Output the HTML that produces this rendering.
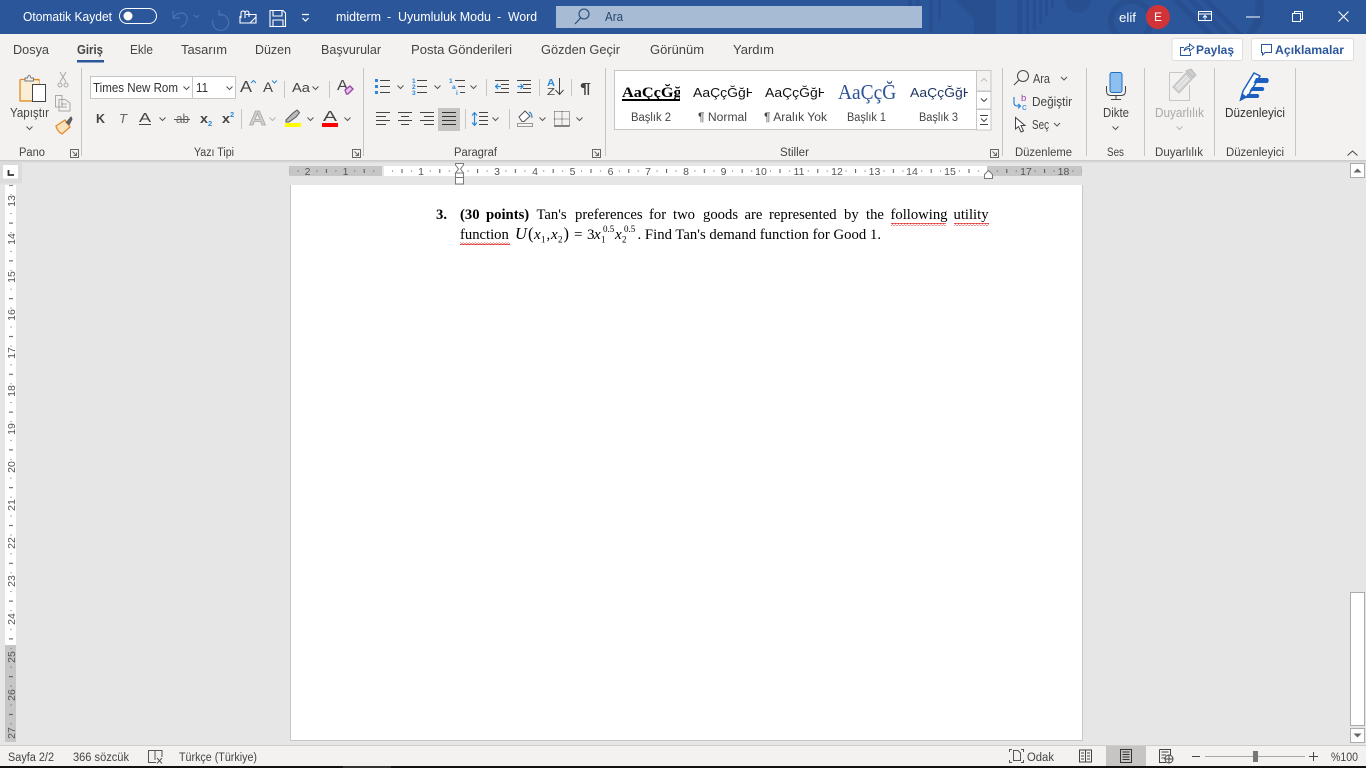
<!DOCTYPE html>
<html lang="tr"><head><meta charset="utf-8"><title>midterm - Word</title>
<style>
html,body{margin:0;padding:0;background:#e6e6e6;overflow:hidden}
svg{display:block}
text{font-family:"Liberation Sans",sans-serif;fill:#444;font-size:12.5px}
.w{fill:#fff}
.g{font-size:11.5px}
.r{font-size:10.5px;fill:#555}
.t{font-family:"Liberation Serif",serif;fill:#000;font-size:14.67px}
.b{font-weight:bold}
.i{font-style:italic}
.ln{fill:none;stroke:#444;stroke-width:1}
.bl{fill:none;stroke:#2b88d8;stroke-width:1.2}
</style></head><body>
<svg xmlns="http://www.w3.org/2000/svg" width="1366" height="768" viewBox="0 0 1366 768">
<defs>
<path id="c" d="M-3-1.5L0 1.5L3-1.5" fill="none" stroke="#555" stroke-width="1"/>
<path id="cg" d="M-3-1.5L0 1.5L3-1.5" fill="none" stroke="#b5b5b5" stroke-width="1"/>
<path id="la" d="M0 0H8V8H0ZM2 2L6 6M3 6H6V3" fill="none" stroke="#666" stroke-width="1"/>
<pattern id="sqp" width="3" height="3" patternUnits="userSpaceOnUse"><path d="M0 .6L1.5 2L3 .6" fill="none" stroke="#e01b1b" stroke-width="1"/></pattern>
<pattern id="hr" x="383" y="165" width="37.8" height="12" patternUnits="userSpaceOnUse"><rect x="9" y="5.5" width="1" height="1" fill="#555"/><rect x="18.5" y="4" width="1" height="4" fill="#555"/><rect x="28" y="5.5" width="1" height="1" fill="#555"/></pattern>
<pattern id="vr" x="5" y="166.3" width="12" height="37.8" patternUnits="userSpaceOnUse"><rect x="5.5" y="9" width="1" height="1" fill="#555"/><rect x="4" y="18.5" width="4" height="1" fill="#555"/><rect x="5.5" y="28" width="1" height="1" fill="#555"/></pattern>
<clipPath id="tb"><rect x="0" y="0" width="1366" height="34"/></clipPath>
</defs>

<!-- backgrounds -->
<rect width="1366" height="768" fill="#e6e6e6"/>
<rect width="1366" height="34" fill="#2b579a"/>
<g clip-path="url(#tb)" fill="#285090">
<rect x="908" y="0" width="4" height="20"/><rect x="916" y="0" width="3" height="26"/><rect x="929" y="0" width="4" height="32"/><rect x="938" y="0" width="3" height="20"/>
<path d="M955 0L975 20V0Z"/><rect x="974" y="0" width="22" height="34"/><rect x="1017" y="0" width="5" height="34"/><rect x="1026" y="0" width="3" height="34"/><rect x="1033" y="0" width="3" height="30"/><rect x="1039" y="0" width="3" height="24"/><rect x="1045" y="0" width="3" height="16"/><rect x="1051" y="0" width="3" height="8"/>
<circle cx="1078" cy="0" r="13"/>
<circle cx="1131" cy="21" r="20" fill="none" stroke="#285090" stroke-width="6"/>
<path d="M1180 0L1214 34H1206L1172 0ZM1195 0L1229 34H1221L1187 0ZM1210 0L1244 34H1236L1202 0Z"/>
<path d="M1263 0Q1268 20 1254 34H1246Q1258 18 1255 0Z"/>
</g>
<rect y="34" width="1366" height="126" fill="#f3f2f1"/>
<rect y="160" width="1366" height="1" fill="#cbcbcb"/><rect y="161" width="1366" height="1" fill="#d6d6d6"/><rect y="162" width="1366" height="1" fill="#dedede"/>

<!-- title bar -->
<text class="w" x="23" y="21" textLength="89" lengthAdjust="spacingAndGlyphs">Otomatik Kaydet</text>
<rect x="119.500" y="8.500" width="37" height="15" rx="7.500" fill="none" stroke="#fff"/>
<circle cx="128" cy="16" r="4.500" fill="#fff"/>
<g fill="none" stroke="#4a72ad" stroke-width="1.200"><path d="M173 11V18H180M173 18C177 11 188 11 187 20Q186 25 181 27"/><path d="M194 15l2.500 2.500l2.500-2.500"/><path d="M219 10V15H224M219.500 14.500A8 8 0 1 1 213 20"/></g>
<g fill="none" stroke="#fff" stroke-width="1.100"><path d="M246 14.500H256V23H240V16M250 23L256 17"/><path d="M241 18V13Q241 11 243 11Q245 11 245 13V18M245 14Q245 11 247 11Q249 11 249 14V17"/>
<path d="M270 10.500H283L285.500 13V26.500H270ZM273 10.500V16H282V10.500M273 26.500V20H283V26.500"/>
<path d="M302 14.500H309M302.500 18l3 3l3-3" stroke-width="1.200"/></g>
<text class="w" x="336" y="21" textLength="45" lengthAdjust="spacingAndGlyphs">midterm</text>
<text class="w" x="387" y="21">-</text>
<text class="w" x="398" y="21" textLength="93" lengthAdjust="spacingAndGlyphs">Uyumluluk Modu</text>
<text class="w" x="497" y="21">-</text>
<text class="w" x="508" y="21" textLength="29" lengthAdjust="spacingAndGlyphs">Word</text>
<rect x="556" y="6" width="366" height="22" fill="#a8bbd4"/>
<g fill="none" stroke="#24466f" stroke-width="1.100"><circle cx="584" cy="14" r="5"/><path d="M580.500 18L575 24"/></g>
<text x="605" y="21" textLength="18" lengthAdjust="spacingAndGlyphs" style="fill:#24466f">Ara</text>
<text class="w" x="1119" y="22" textLength="17" lengthAdjust="spacingAndGlyphs">elif</text>
<circle cx="1158" cy="17" r="12" fill="#d13438"/>
<text class="w" x="1154" y="21" textLength="8" lengthAdjust="spacingAndGlyphs" style="font-size:11.500px">E</text>
<g fill="none" stroke="#fff" stroke-width="1"><path d="M1198.500 11.500H1211.500V20.500H1198.500ZM1198.500 14H1211.500M1205 19.500V15.500M1203 17.500L1205 15.500L1207 17.500"/>
<path d="M1246 17H1260"/>
<path d="M1292.500 13.500H1300.500V21.500H1292.500ZM1294.500 13.500V11.500H1302.500V19.500H1300.500"/>
<path d="M1338.500 11.500L1348.500 21.500M1348.500 11.500L1338.500 21.500" stroke-width="1.100"/></g>

<!-- tabs -->
<text x="13" y="54" textLength="36" lengthAdjust="spacingAndGlyphs">Dosya</text>
<text x="77" y="54" textLength="26" lengthAdjust="spacingAndGlyphs" style="font-weight:bold;fill:#444">Giriş</text>
<rect x="77" y="60" width="27" height="2.500" fill="#2b579a"/>
<text x="130" y="54" textLength="23" lengthAdjust="spacingAndGlyphs">Ekle</text>
<text x="181" y="54" textLength="46" lengthAdjust="spacingAndGlyphs">Tasarım</text>
<text x="255" y="54" textLength="36" lengthAdjust="spacingAndGlyphs">Düzen</text>
<text x="321" y="54" textLength="60" lengthAdjust="spacingAndGlyphs">Başvurular</text>
<text x="411" y="54" textLength="101" lengthAdjust="spacingAndGlyphs">Posta Gönderileri</text>
<text x="541" y="54" textLength="79" lengthAdjust="spacingAndGlyphs">Gözden Geçir</text>
<text x="650" y="54" textLength="54" lengthAdjust="spacingAndGlyphs">Görünüm</text>
<text x="733" y="54" textLength="41" lengthAdjust="spacingAndGlyphs">Yardım</text>

<rect x="1172" y="38.500" width="70.500" height="22" rx="2" fill="#fff" stroke="#e1dfdd"/>
<path d="M1184 47.500H1180.500V55.500H1190.500V52M1184 51Q1185 46.500 1189.500 46.500V44L1194 47.500L1189.500 51V48.500Q1186 48.500 1184 51Z" fill="none" stroke="#2b579a"/>
<text x="1196" y="54" textLength="38" lengthAdjust="spacingAndGlyphs" style="fill:#2b579a;font-weight:bold;font-size:12px">Paylaş</text>
<rect x="1251.500" y="38.500" width="102" height="22" rx="2" fill="#fff" stroke="#e1dfdd"/>
<path d="M1261.500 44.500H1271.500V52.500H1265L1262.500 55V52.500H1261.500Z" fill="none" stroke="#2b579a"/>
<text x="1275" y="54" textLength="69" lengthAdjust="spacingAndGlyphs" style="fill:#2b579a;font-weight:bold;font-size:12px">Açıklamalar</text>

<!-- group separators -->
<g fill="#c6c6c6"><rect x="81" y="68" width="1" height="88"/><rect x="363" y="68" width="1" height="88"/><rect x="605" y="68" width="1" height="88"/><rect x="1002" y="68" width="1" height="88"/><rect x="1086" y="68" width="1" height="88"/><rect x="1144" y="68" width="1" height="88"/><rect x="1214" y="68" width="1" height="88"/><rect x="1295" y="68" width="1" height="88"/></g>

<!-- Pano -->
<path d="M20 79.500H27M34 79.500H39V86M32 101H20V79.500" fill="#f7ddb0" stroke="#e08a1e" stroke-width="1.200"/>
<rect x="21" y="81" width="18" height="19" fill="#fbeed6"/>
<path d="M25 81V78H27.500Q29 72.500 31 78H33.500V81Z" fill="#f3f2f1" stroke="#777"/>
<rect x="32.500" y="84.500" width="13" height="17" fill="#fff" stroke="#444"/>
<text x="10" y="117" textLength="39" lengthAdjust="spacingAndGlyphs">Yapıştır</text>
<use href="#c" x="29.500" y="128"/>
<text class="g" x="19" y="156" textLength="26" lengthAdjust="spacingAndGlyphs">Pano</text>
<use href="#la" x="70.500" y="149.500"/>
<g fill="none" stroke="#a8a8a8" stroke-width="1"><path d="M60 72L66 82M66 72L60 82"/><circle cx="60" cy="85" r="2"/><circle cx="66" cy="85" r="2"/>
<path d="M55.500 95.500H62V107H55.500ZM59 99.500H65L70 103V111H59Z" fill="#f3f2f1"/><path d="M61 104H67M61 107H67"/></g>
<path d="M56 126L65 120L70 127L62 134Q57 131 56 126Z" fill="#fbe3bd" stroke="#e8872a" stroke-width="1.300"/>
<path d="M66 123L71 117L72 119L69 125" fill="#666" stroke="#555"/>

<!-- Font -->
<rect x="90.500" y="76.500" width="102" height="22" fill="#fff" stroke="#c6c6c6"/>
<rect x="192.500" y="76.500" width="43" height="22" fill="#fff" stroke="#c6c6c6"/>
<text x="93" y="92" textLength="85" lengthAdjust="spacingAndGlyphs" style="fill:#333">Times New Rom</text>
<use href="#c" x="186.500" y="88"/>
<text x="196" y="92" textLength="12" lengthAdjust="spacingAndGlyphs" style="fill:#333">11</text>
<use href="#c" x="229.500" y="88"/>
<text x="240" y="92" textLength="12" lengthAdjust="spacingAndGlyphs" style="font-size:16px">A</text>
<path d="M251 83L253.500 80.500L256 83" fill="none" stroke="#2b88d8"/>
<text x="263" y="92" textLength="10" lengthAdjust="spacingAndGlyphs" style="font-size:14px">A</text>
<path d="M272 80.500L274.500 83L277 80.500" fill="none" stroke="#2b88d8"/>
<rect x="284" y="81" width="1" height="17" fill="#c6c6c6"/>
<text x="292" y="92" textLength="18" lengthAdjust="spacingAndGlyphs">Aa</text>
<use href="#c" x="315.500" y="88"/>
<rect x="329" y="81" width="1" height="17" fill="#c6c6c6"/>
<text x="337" y="90" textLength="11" lengthAdjust="spacingAndGlyphs" style="font-size:15px">A</text>
<path d="M345 90L350 86L353 89L348 94H346.500Z" fill="#e4c4ea" stroke="#9a3fa8" stroke-width="1.300"/>

<text x="96" y="123" textLength="9" lengthAdjust="spacingAndGlyphs" style="font-weight:bold;font-size:13px">K</text>
<text x="119" y="123" textLength="8" lengthAdjust="spacingAndGlyphs" style="font-style:italic;font-size:13px;fill:#666">T</text>
<text x="139" y="122" textLength="12" lengthAdjust="spacingAndGlyphs" style="font-size:13px">A</text>
<rect x="139" y="124" width="12" height="1" fill="#444"/>
<use href="#c" x="162.500" y="119"/>
<text x="176" y="123" textLength="13" lengthAdjust="spacingAndGlyphs" style="font-size:12.500px;fill:#666">ab</text>
<rect x="174" y="119" width="16" height="1" fill="#555"/>
<text x="200" y="123" textLength="8" lengthAdjust="spacingAndGlyphs" style="font-weight:bold;font-size:12.500px">x</text>
<text x="208" y="126" style="font-size:7.500px;font-weight:bold;fill:#2b88d8">2</text>
<text x="222" y="123" textLength="8" lengthAdjust="spacingAndGlyphs" style="font-weight:bold;font-size:12.500px">x</text>
<text x="230" y="117" style="font-size:7.500px;font-weight:bold;fill:#2b88d8">2</text>
<rect x="241" y="109" width="1" height="20" fill="#c6c6c6"/>
<text x="249" y="125" textLength="17" lengthAdjust="spacingAndGlyphs" style="font-size:20px;font-weight:bold;fill:#d0d0d0;stroke:#a5a5a5;stroke-width:.7px">A</text>
<use href="#cg" x="272.500" y="119"/>
<path d="M286 120L293 113L297 110L299.500 112.500L296 117L289 122H286Z" fill="#bbb" stroke="#555"/>
<rect x="285" y="123" width="16" height="4" fill="#ff0"/>
<use href="#c" x="310.500" y="119"/>
<text x="323" y="121" textLength="14" lengthAdjust="spacingAndGlyphs" style="font-size:15px">A</text>
<rect x="322" y="123" width="16" height="4" fill="#f00"/>
<use href="#c" x="347.500" y="119"/>
<text class="g" x="194" y="156" textLength="40" lengthAdjust="spacingAndGlyphs">Yazı Tipi</text>
<use href="#la" x="352.500" y="149.500"/>

<!-- Paragraph -->
<g fill="#2b88d8"><rect x="375" y="79" width="3" height="3"/><rect x="375" y="85" width="3" height="3"/><rect x="375" y="91" width="3" height="3"/></g>
<path class="ln" d="M380 80.500H390M380 86.500H390M380 92.500H390"/>
<use href="#c" x="400.500" y="87"/>
<text x="412" y="83" style="font-size:6.500px;font-weight:bold;fill:#2b88d8">1</text><text x="412" y="89" style="font-size:6.500px;font-weight:bold;fill:#2b88d8">2</text><text x="412" y="95" style="font-size:6.500px;font-weight:bold;fill:#2b88d8">3</text>
<path class="ln" d="M417 80.500H427M417 86.500H427M417 92.500H427"/>
<use href="#c" x="437.500" y="87"/>
<text x="449" y="83" style="font-size:6.500px;font-weight:bold;fill:#2b88d8">1</text><text x="452" y="89" style="font-size:6.500px;font-weight:bold;fill:#2b88d8">a</text><text x="456" y="95" style="font-size:6.500px;font-weight:bold;fill:#2b88d8">i</text>
<path class="ln" d="M455 80.500H465M458 86.500H465M460 92.500H465"/>
<use href="#c" x="473.500" y="87"/>
<rect x="486" y="79" width="1" height="17" fill="#c6c6c6"/>
<path class="ln" d="M495 80.500H509M501 84.500H509M501 88.500H509M495 92.500H509"/>
<path class="bl" d="M501 86.500H495.500M498 84L495.500 86.500L498 89"/>
<path class="ln" d="M517 80.500H531M517 92.500H531M523 84.500H531M523 88.500H531"/>
<path class="bl" d="M517.500 86.500H523M520.500 84L523 86.500L520.500 89"/>
<rect x="539" y="79" width="1" height="17" fill="#c6c6c6"/>
<text x="547" y="86" textLength="8" lengthAdjust="spacingAndGlyphs" style="font-size:10px;font-weight:bold;fill:#2b88d8">A</text>
<text x="547" y="95" textLength="8" lengthAdjust="spacingAndGlyphs" style="font-size:10px;fill:#444">Z</text>
<path class="ln" d="M559.500 78V94M555.500 90L559.500 94.500L563.500 90"/>
<rect x="571" y="79" width="1" height="17" fill="#c6c6c6"/>
<text x="580" y="93" textLength="11" lengthAdjust="spacingAndGlyphs" style="font-size:15px;font-weight:bold">¶</text>

<path class="ln" d="M376 112.500H390M376 116.500H386M376 120.500H390M376 124.500H386"/>
<path class="ln" d="M398 112.500H412M401 116.500H409M398 120.500H412M401 124.500H409"/>
<path class="ln" d="M420 112.500H434M424 116.500H434M420 120.500H434M424 124.500H434"/>
<rect x="438" y="108" width="22" height="23" fill="#c6c5c4"/>
<path class="ln" d="M442 112.500H456M442 116.500H456M442 120.500H456M442 124.500H456" style="stroke:#333"/>
<rect x="465" y="109" width="1" height="20" fill="#c6c6c6"/>
<path class="bl" d="M474.500 113V125M472 115.500L474.500 112.500L477 115.500M472 122.500L474.500 125.500L477 122.500"/>
<path class="ln" d="M479 112.500H488M479 116.500H488M479 120.500H488M479 124.500H488"/>
<use href="#c" x="495.500" y="119"/>
<rect x="509" y="109" width="1" height="20" fill="#c6c6c6"/>
<path d="M519 117L525 111L530 116L524 121.500H522Z" fill="#fff" stroke="#555"/>
<path class="bl" d="M529 112Q532 113 532 118"/>
<rect x="517.500" y="123.500" width="15" height="3" fill="#f3f2f1" stroke="#999"/>
<use href="#c" x="542.500" y="119"/>
<path d="M554.500 111.500H569.500V126M554.500 111.500V126M562 111.500V126M554.500 119H569.500" fill="none" stroke="#555" stroke-dasharray="1 1"/>
<rect x="554" y="125.500" width="15.500" height="1" fill="#111"/>
<use href="#c" x="579.500" y="119"/>
<text class="g" x="454" y="156" textLength="43" lengthAdjust="spacingAndGlyphs">Paragraf</text>
<use href="#la" x="592.500" y="149.500"/>

<!-- Styles -->
<rect x="614.500" y="70.500" width="362" height="59" fill="#fff" stroke="#c6c6c6"/>
<svg x="620" y="80" width="60" height="24" viewBox="620 80 60 24">
<text x="622" y="97" textLength="66" lengthAdjust="spacingAndGlyphs" style="font-family:'Liberation Serif',serif;font-size:14.500px;font-weight:bold;fill:#000">AaÇçĞğİ</text>
</svg>
<rect x="622" y="99" width="58" height="2" fill="#000"/>
<svg x="690" y="80" width="62" height="24" viewBox="690 80 62 24"><text x="693" y="97" textLength="66" lengthAdjust="spacingAndGlyphs" style="font-size:12.500px;fill:#111">AaÇçĞğHł</text></svg>
<svg x="762" y="80" width="62" height="24" viewBox="762 80 62 24"><text x="765" y="97" textLength="66" lengthAdjust="spacingAndGlyphs" style="font-size:12.500px;fill:#111">AaÇçĞğHł</text></svg>
<svg x="836" y="76" width="60" height="30" viewBox="836 76 60 30"><text x="838" y="99" textLength="68" lengthAdjust="spacingAndGlyphs" style="font-family:'Liberation Serif',serif;font-size:21px;fill:#2f5496">AaÇçĞğ</text></svg>
<svg x="908" y="80" width="60" height="24" viewBox="908 80 60 24"><text x="910" y="97" textLength="66" lengthAdjust="spacingAndGlyphs" style="font-size:13px;fill:#1f3864">AaÇçĞğHł</text></svg>
<text class="g" x="631" y="121" textLength="40" lengthAdjust="spacingAndGlyphs">Başlık 2</text>
<text class="g" x="698" y="121" textLength="49" lengthAdjust="spacingAndGlyphs">¶ Normal</text>
<text class="g" x="764" y="121" textLength="63" lengthAdjust="spacingAndGlyphs">¶ Aralık Yok</text>
<text class="g" x="847" y="121" textLength="39" lengthAdjust="spacingAndGlyphs">Başlık 1</text>
<text class="g" x="919" y="121" textLength="39" lengthAdjust="spacingAndGlyphs">Başlık 3</text>
<rect x="976.500" y="70.500" width="14.500" height="20.500" fill="#f3f2f1" stroke="#c6c6c6"/>
<rect x="976.500" y="91.500" width="14.500" height="17.500" fill="#fff" stroke="#c6c6c6"/>
<rect x="976.500" y="109.500" width="14.500" height="20.500" fill="#fff" stroke="#c6c6c6"/>
<path d="M981 81.500L984 78.500L987 81.500" fill="none" stroke="#bbb"/>
<path d="M981 98.500L984 101.500L987 98.500" fill="none" stroke="#444"/>
<path d="M980 115.500H988M981 118.500L984 121.500L987 118.500M980 124.500H988" fill="none" stroke="#444"/>
<text class="g" x="780" y="156" textLength="29" lengthAdjust="spacingAndGlyphs">Stiller</text>
<use href="#la" x="990.500" y="149.500"/>

<!-- Editing -->
<g fill="none" stroke="#444"><circle cx="1023" cy="76" r="5.500"/><path d="M1019 80L1014 85"/></g>
<text x="1033" y="83" textLength="17" lengthAdjust="spacingAndGlyphs">Ara</text>
<use href="#c" x="1064" y="78.500"/>
<text x="1021" y="101" style="font-size:9.500px;fill:#9a3fa8">b</text>
<text x="1022" y="110" style="font-size:9.500px;fill:#2b88d8">c</text>
<path class="bl" d="M1014 97V103Q1014 106 1018 106H1020M1018 104L1020.500 106L1018 108.500"/>
<text x="1032" y="106" textLength="40" lengthAdjust="spacingAndGlyphs">Değiştir</text>
<path d="M1015.500 117.500V129L1018.500 126.500L1021 132L1023.500 131L1021 125.500H1025Z" fill="#fff" stroke="#444"/>
<text x="1032" y="129" textLength="17" lengthAdjust="spacingAndGlyphs">Seç</text>
<use href="#c" x="1057" y="124.500"/>
<text class="g" x="1015" y="156" textLength="57" lengthAdjust="spacingAndGlyphs">Düzenleme</text>

<!-- Dikte -->
<rect x="1110" y="72.500" width="12" height="20" rx="2" fill="#8dc0ee" stroke="#1d6fc2"/>
<path d="M1106.500 86V91Q1106.500 95.500 1111 95.500H1121Q1125.500 95.500 1125.500 91V86M1116 95.500V99.500M1111 99.500H1121" fill="none" stroke="#444"/>
<text x="1103" y="117" textLength="26" lengthAdjust="spacingAndGlyphs">Dikte</text>
<use href="#c" x="1115.500" y="128"/>
<text class="g" x="1107" y="156" textLength="17" lengthAdjust="spacingAndGlyphs">Ses</text>

<!-- Duyarlilik -->
<path d="M1169.500 72.500H1183M1189.500 85V100.500H1169.500V72.500" fill="none" stroke="#c6c6c6"/>
<path d="M1173 87L1186 73L1192 79L1179 93Z" fill="#d8d8d8" stroke="#bcbcbc"/>
<path d="M1186 71L1191 69L1196 75L1193 78Z" fill="#ccc" stroke="#bbb"/>
<path d="M1176 87L1187 76M1178 89L1189 78" stroke="#f0f0f0" fill="none"/>
<text x="1155" y="117" textLength="49" lengthAdjust="spacingAndGlyphs" style="fill:#a9a9a9">Duyarlılık</text>
<use href="#cg" x="1179.500" y="128"/>
<text class="g" x="1155" y="156" textLength="48" lengthAdjust="spacingAndGlyphs">Duyarlılık</text>

<!-- Duzenleyici -->
<path d="M1240.500 100L1243 91L1254 73L1260 76L1248 96Z" fill="#fff" stroke="#1d5fbf" stroke-width="1.500"/>
<path d="M1240 101L1242.500 93.500L1246.500 96.500Z" fill="#1d5fbf"/>
<path d="M1256 78H1267.500Q1270 80.500 1267.500 83H1253.500ZM1252 87H1263Q1265.500 89 1263 91H1249.500ZM1247.500 94H1258Q1260.500 96 1258 98H1245Z" fill="#1d5fbf"/>
<text x="1225" y="117" textLength="60" lengthAdjust="spacingAndGlyphs" style="fill:#333">Düzenleyici</text>
<text class="g" x="1226" y="156" textLength="58" lengthAdjust="spacingAndGlyphs">Düzenleyici</text>
<path d="M1347.500 155.500L1352.500 151L1357.500 155.500" fill="none" stroke="#444"/>

<!-- Tab selector -->
<rect x="0" y="162" width="22" height="21.500" fill="#dcdcdc"/>
<rect x="3" y="165" width="15" height="13.500" fill="#fff"/>
<path d="M8.500 170V175H14" fill="none" stroke="#333" stroke-width="1.800"/>

<!-- Horizontal ruler -->
<rect x="289" y="166" width="93" height="10" fill="#c6c6c6"/>
<rect x="384" y="166" width="603" height="10" fill="#fff"/>
<rect x="987" y="166" width="95" height="10" fill="#c6c6c6"/>
<rect x="289" y="165" width="793" height="12" fill="url(#hr)"/>
<g text-anchor="middle">
<text class="r" x="307.500" y="175">2</text><text class="r" x="345.500" y="175">1</text><text class="r" x="421" y="175">1</text><text class="r" x="497" y="175">3</text><text class="r" x="535" y="175">4</text><text class="r" x="572.500" y="175">5</text><text class="r" x="610.500" y="175">6</text><text class="r" x="648" y="175">7</text><text class="r" x="686" y="175">8</text><text class="r" x="723.500" y="175">9</text><text class="r" x="761" y="175">10</text><text class="r" x="799" y="175">11</text><text class="r" x="837" y="175">12</text><text class="r" x="874.500" y="175">13</text><text class="r" x="912" y="175">14</text><text class="r" x="950" y="175">15</text><text class="r" x="1026" y="175">17</text><text class="r" x="1063.500" y="175">18</text>
</g>
<path d="M455.500 163.500H463.500V165L460.500 169L463.500 173H455.500L458.500 169L455.500 165Z" fill="#fff" stroke="#777"/>
<rect x="455.500" y="177" width="8" height="7" fill="#fff" stroke="#777"/>
<path d="M455.500 173H463.500V177.500H455.500Z" fill="#fff" stroke="#777"/>
<path d="M984.500 178.500V174.500L988.500 170.500L992.500 174.500V178.500Z" fill="#fff" stroke="#777"/>

<!-- Vertical ruler -->
<rect x="5" y="185" width="11" height="460" fill="#fff"/>
<rect x="5" y="645" width="11" height="97" fill="#c6c6c6"/>
<rect x="5" y="185" width="11" height="557" fill="url(#vr)"/>
<g text-anchor="middle">
<text class="r" transform="translate(15 201) rotate(-90)">13</text>
<text class="r" transform="translate(15 239) rotate(-90)">14</text>
<text class="r" transform="translate(15 277) rotate(-90)">15</text>
<text class="r" transform="translate(15 315) rotate(-90)">16</text>
<text class="r" transform="translate(15 353) rotate(-90)">17</text>
<text class="r" transform="translate(15 391) rotate(-90)">18</text>
<text class="r" transform="translate(15 429) rotate(-90)">19</text>
<text class="r" transform="translate(15 467) rotate(-90)">20</text>
<text class="r" transform="translate(15 505) rotate(-90)">21</text>
<text class="r" transform="translate(15 543) rotate(-90)">22</text>
<text class="r" transform="translate(15 581) rotate(-90)">23</text>
<text class="r" transform="translate(15 619) rotate(-90)">24</text>
<text class="r" transform="translate(15 657) rotate(-90)">25</text>
<text class="r" transform="translate(15 695) rotate(-90)">26</text>
<text class="r" transform="translate(15 733) rotate(-90)">27</text>
</g>

<!-- Page: no top edge, sides and bottom only -->
<rect x="291" y="185" width="791" height="555" fill="#fff"/>
<path d="M290.500 185V740.500H1082.500V185" fill="none" stroke="#c6c6c6"/>

<!-- Document text -->
<text class="t b" x="436" y="219">3.</text>
<text class="t b" x="460" y="219">(30</text>
<text class="t b" x="486" y="219">points)</text>
<text class="t" x="536.500" y="219">Tan's</text>
<text class="t" x="575" y="219">preferences</text>
<text class="t" x="649" y="219">for</text>
<text class="t" x="673" y="219">two</text>
<text class="t" x="703" y="219">goods</text>
<text class="t" x="744.500" y="219">are</text>
<text class="t" x="769" y="219">represented</text>
<text class="t" x="844" y="219">by</text>
<text class="t" x="866" y="219">the</text>
<text class="t" x="890.500" y="219">following</text>
<text class="t" x="953.500" y="219">utility</text>
<rect x="891" y="223" width="55" height="3" fill="url(#sqp)"/>
<rect x="954" y="223" width="35" height="3" fill="url(#sqp)"/>
<text class="t" x="460" y="239">function</text>
<rect x="460" y="242" width="50" height="3" fill="url(#sqp)"/>
<text class="t i" x="515" y="239" style="font-size:16.500px">U</text>
<text class="t" x="528" y="239" style="font-size:16.500px">(</text>
<text class="t i" x="534" y="239" style="font-size:15px">x</text>
<text class="t" x="541" y="242.500" style="font-size:9px">1</text>
<text class="t" x="546.500" y="239">,</text>
<text class="t i" x="551" y="239" style="font-size:15px">x</text>
<text class="t" x="558" y="242.500" style="font-size:9px">2</text>
<text class="t" x="563.500" y="239" style="font-size:16.500px">)</text>
<text class="t" x="574" y="239" style="font-size:15px">=</text>
<text class="t" x="587" y="239" style="font-size:15px">3</text>
<text class="t i" x="594" y="239" style="font-size:15px">x</text>
<text class="t" x="601" y="242.500" style="font-size:9px">1</text>
<text class="t" x="603" y="232" style="font-size:9px">0.5</text>
<text class="t i" x="615" y="239" style="font-size:15px">x</text>
<text class="t" x="622" y="242.500" style="font-size:9px">2</text>
<text class="t" x="624" y="232" style="font-size:9px">0.5</text>
<text class="t" x="637.500" y="239" textLength="243.500">. Find Tan's demand function for Good 1.</text>

<!-- Scrollbar -->
<rect x="1349" y="163" width="17" height="582" fill="#e6e6e6"/>
<rect x="1350.500" y="163.500" width="14" height="14" fill="#fff" stroke="#ababab"/>
<path d="M1353.500 172.500H1361.500L1357.500 168.500Z" fill="#666"/>
<rect x="1350.500" y="592.500" width="14" height="133" fill="#fff" stroke="#ababab"/>
<rect x="1350.500" y="728.500" width="14" height="14" fill="#fff" stroke="#ababab"/>
<path d="M1353.500 733.500H1361.500L1357.500 737.500Z" fill="#666"/>

<!-- Status bar -->
<rect y="745" width="1366" height="21" fill="#f3f2f1"/>
<rect y="745" width="1366" height="1" fill="#cfcdcb"/>
<rect y="766" width="1366" height="2" fill="#111"/>
<rect x="343" y="766" width="48" height="2" fill="#333"/>
<text class="g" x="8" y="761" textLength="46" lengthAdjust="spacingAndGlyphs">Sayfa 2/2</text>
<text class="g" x="73" y="761" textLength="56" lengthAdjust="spacingAndGlyphs">366 sözcük</text>
<path d="M155 750.500H148.500V762.500H156M155 750.500V760M155 750.500H162V757" fill="none" stroke="#555"/>
<path d="M157 758L162 763.500M162 758L157 763.500" fill="none" stroke="#555"/>
<text class="g" x="179" y="761" textLength="78" lengthAdjust="spacingAndGlyphs">Türkçe (Türkiye)</text>
<path d="M1009.500 752V749.500H1012M1009.500 760V762.500H1012M1023.500 752V749.500H1021M1023.500 760V762.500H1021M1013.500 760.500V750.500H1018L1020.500 753V760.500Z" fill="none" stroke="#555"/>
<text class="g" x="1027" y="761" textLength="27" lengthAdjust="spacingAndGlyphs">Odak</text>
<path d="M1079.500 750H1085.500V762H1079.500ZM1085.500 750H1091.500V762H1085.500ZM1081 753H1084M1081 756H1084M1081 759H1084M1087 753H1090M1087 756H1090M1087 759H1090" fill="none" stroke="#444"/>
<rect x="1106" y="746" width="40" height="20" fill="#c6c5c4"/>
<path d="M1120.500 749.500H1131.500V762.500H1120.500ZM1122.500 752H1129.500M1122.500 754.500H1129.500M1122.500 757H1129.500M1122.500 759.500H1129.500" fill="none" stroke="#333"/>
<path d="M1159.500 749.500H1170.500V756M1159.500 749.500V762.500H1166M1161.500 752H1168.500M1161.500 755H1166M1161.500 758H1165" fill="none" stroke="#444"/>
<circle cx="1169" cy="759" r="4" fill="#f3f2f1" stroke="#444"/>
<path d="M1165 759H1173M1169 755V763" stroke="#444" fill="none"/>
<rect x="1192" y="756" width="8" height="1" fill="#444"/>
<rect x="1205" y="756" width="100" height="1" fill="#a9a9a9"/>
<rect x="1253" y="751" width="5" height="11" fill="#777"/>
<path d="M1309 756.500H1318M1313.500 752V761" fill="none" stroke="#444"/>
<text class="g" x="1331" y="761" textLength="27" lengthAdjust="spacingAndGlyphs">%100</text>
</svg>
</body></html>
